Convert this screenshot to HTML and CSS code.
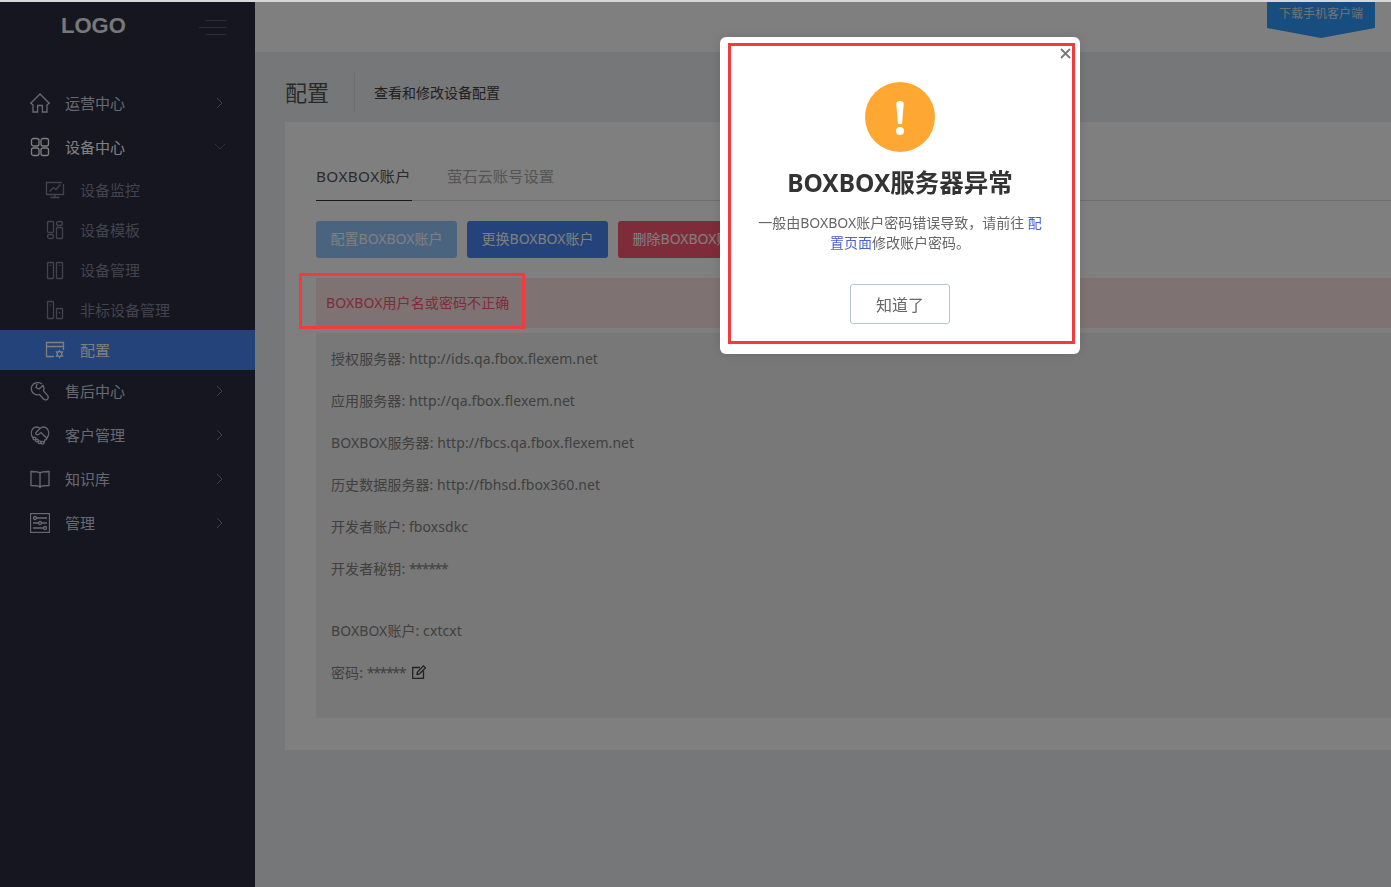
FILE: index.html
```html
<!DOCTYPE html>
<html lang="zh-CN">
<head>
<meta charset="utf-8">
<title>配置</title>
<link rel="stylesheet" href="styles.css">
</head>
<body>
<div class="topline"></div>
<div class="app">
  <aside class="sidebar">
    <div class="brand">
      <span class="logo">LOGO</span>
      <svg class="burger" viewBox="0 0 27 16" width="27" height="16"><path d="M7 .5H27M0 7.500H27M7 14.500H27"/></svg>
    </div>
    <nav class="nav">
      <a class="nav-item">
        <svg class="ico" viewBox="0 0 20 20"><path d="M10 1 .8 10.200l2.200 1.600V19h4.600v-6.500h4.800V19H17v-7.200l2.200-1.600z"/></svg>
        <span class="nav-label">运营中心</span>
        <svg class="chev" viewBox="0 0 8 12"><path d="M1 1l5 5-5 5"/></svg>
      </a>
      <a class="nav-item nav-open">
        <svg class="ico" viewBox="0 0 20 20"><rect x="1.500" y="1.500" width="7.500" height="7.500" rx="2"/><rect x="11" y="1.500" width="7.500" height="7.500" rx="2"/><rect x="1.500" y="11" width="7.500" height="7.500" rx="2"/><rect x="11" y="11" width="7.500" height="7.500" rx="2"/></svg>
        <span class="nav-label">设备中心</span>
        <svg class="chev-down" viewBox="0 0 12 8"><path d="M1 1l5 5 5-5"/></svg>
      </a>
      <div class="subnav">
        <a class="sub-item">
          <svg class="ico" viewBox="0 0 20 20"><path d="M17 2.500H1.500v12h17V4M10 14.500v3M5.500 17.500h9M4.500 11.500l4-4 2.500 2 4.500-5"/></svg>
          <span class="sub-label">设备监控</span>
        </a>
        <a class="sub-item">
          <svg class="ico" viewBox="0 0 20 20"><rect x="2.500" y="1.500" width="6" height="11" rx="1"/><rect x="2.500" y="14.500" width="6" height="4" rx="2"/><rect x="11.500" y="1.500" width="6" height="4" rx="2"/><rect x="11.500" y="7.500" width="6" height="11" rx="1"/></svg>
          <span class="sub-label">设备模板</span>
        </a>
        <a class="sub-item">
          <svg class="ico" viewBox="0 0 20 20"><rect x="2.500" y="2.500" width="6" height="16" rx=".5"/><rect x="11.500" y="2.500" width="6" height="16" rx=".5"/><path d="M5.500 5v1M14.500 5v1"/></svg>
          <span class="sub-label">设备管理</span>
        </a>
        <a class="sub-item">
          <svg class="ico" viewBox="0 0 20 20"><rect x="2.500" y="1.500" width="6" height="17" rx=".5"/><rect x="11.500" y="8.500" width="6" height="10" rx=".5"/><path d="M5.500 4.500v1M14.500 12v1.500"/></svg>
          <span class="sub-label">非标设备管理</span>
        </a>
        <a class="sub-item sub-active">
          <svg class="ico" viewBox="0 0 20 20"><path d="M9 16.500H1.500V2.500h17V10M1.500 6.500h17"/><path d="M14.500 10.500l1 1.500h2l-1 2 1 2h-2l-1 1.500-1-1.500h-2l1-2-1-2h2z"/></svg>
          <span class="sub-label">配置</span>
        </a>
      </div>
      <a class="nav-item nav-after">
        <svg class="ico" viewBox="0 0 20 20"><path d="M12 3C9 .8 4 1.200 2 4.800c-1.500 3-.5 6.700 2.500 8.200 1.800 1 3.500 1 5 .5l4 4.500c1 1.200 3 1.200 4 .2 1-1 1-2.800 0-3.800l-4-4.500c.8-1.800.7-3.800-.5-5.500L9 8 6 6.500 7 2.800"/></svg>
        <span class="nav-label">售后中心</span>
        <svg class="chev" viewBox="0 0 8 12"><path d="M1 1l5 5-5 5"/></svg>
      </a>
      <a class="nav-item">
        <svg class="ico" viewBox="0 0 20 20"><path d="M3 13C.8 10 .8 6 3 3.500c2-2 5-2 7 0 2-2 5-2 7 0 2.200 2.500 2.200 6.500 0 9.500M10 3.500 6 7.500c-1 1.200.8 3 2.500 2l2.500-2 5.500 5.500c.8 1-.6 2.500-1.800 1.500M15 14.500l-1 3.500"/><circle cx="4.500" cy="13.500" r="1.400"/><circle cx="7" cy="15.500" r="1.400"/><circle cx="9.500" cy="17.200" r="1.400"/><circle cx="12.500" cy="17.800" r="1.400"/></svg>
        <span class="nav-label">客户管理</span>
        <svg class="chev" viewBox="0 0 8 12"><path d="M1 1l5 5-5 5"/></svg>
      </a>
      <a class="nav-item">
        <svg class="ico" viewBox="0 0 20 20"><path d="M10 4C8.500 2.500 6 2.500 1 2.500v14c5 0 7.500 0 9 1.500 1.500-1.500 4-1.500 9-1.500v-14c-5 0-7.500 0-9 1.500zM10 4v15"/></svg>
        <span class="nav-label">知识库</span>
        <svg class="chev" viewBox="0 0 8 12"><path d="M1 1l5 5-5 5"/></svg>
      </a>
      <a class="nav-item">
        <svg class="ico" viewBox="0 0 20 20"><rect x=".5" y=".5" width="19" height="19"/><circle cx="5" cy="5" r="1.500"/><circle cx="10" cy="10" r="1.500"/><circle cx="15" cy="15" r="1.500"/><path d="M6.500 5H17M3 10h5.500M11.500 10H17M3 15h10.500"/></svg>
        <span class="nav-label">管理</span>
        <svg class="chev" viewBox="0 0 8 12"><path d="M1 1l5 5-5 5"/></svg>
      </a>
    </nav>
  </aside>
  <main class="main">
    <header class="topbar">
      <div class="download"><span>下载手机客户端</span></div>
    </header>
    <div class="page-head">
      <h1 class="page-title">配置</h1>
      <p class="page-desc">查看和修改设备配置</p>
    </div>
    <section class="card">
      <div class="tabs">
        <a class="tab tab-active">BOXBOX账户</a>
        <a class="tab">萤石云账号设置</a>
      </div>
      <div class="actions">
        <button class="btn btn-light">配置BOXBOX账户</button>
        <button class="btn btn-blue">更换BOXBOX账户</button>
        <button class="btn btn-red">删除BOXBOX账户</button>
      </div>
      <div class="alert">BOXBOX用户名或密码不正确</div>
      <div class="info">
        <p class="row">授权服务器: http://ids.qa.fbox.flexem.net</p>
        <p class="row">应用服务器: http://qa.fbox.flexem.net</p>
        <p class="row">BOXBOX服务器: http://fbcs.qa.fbox.flexem.net</p>
        <p class="row">历史数据服务器: http://fbhsd.fbox360.net</p>
        <p class="row">开发者账户: fboxsdkc</p>
        <p class="row">开发者秘钥: <span class="stars">******</span></p>
        <p class="row row-gap">BOXBOX账户: cxtcxt</p>
        <p class="row">密码: <span class="stars">******</span>
          <svg class="edit" viewBox="0 0 14 14"><path d="M8 2.500H.7v10.800h10.800V6M5 9.500l.5-2.500L11.500.8l2 2L7.500 9z"/></svg>
        </p>
      </div>
    </section>
  </main>
</div>
<div class="overlay"></div>
<div class="mark mark-alert"></div>
<div class="modal">
  <div class="mark mark-modal"></div>
  <svg class="close" viewBox="0 0 11 11"><path d="M1 1l9 9M10 1l-9 9"/></svg>
  <div class="warn"><span class="warn-bar"></span><span class="warn-dot"></span></div>
  <h2 class="modal-title">BOXBOX服务器异常</h2>
  <p class="modal-text">一般由BOXBOX账户密码错误导致，请前往 <a class="modal-link">配置页面</a>修改账户密码。</p>
  <button class="modal-btn">知道了</button>
</div>
</body>
</html>
```
FILE: styles.css
```css
* { box-sizing: border-box; }
html, body { margin: 0; height: 100%; overflow: hidden; }
body {
  font-family: "Noto Sans", "Noto Sans CJK SC", sans-serif;
  font-size: 15px;
  background: #edeef2;
  color: #8a8a8a;
}
.topline { height: 2px; background: #d8d8d8; position: relative; z-index: 12; }
.app { display: flex; height: 885px; }

/* sidebar */
.sidebar { width: 255px; flex: none; background: #2a2c40; }
.brand { height: 79px; position: relative; }
.logo {
  position: absolute; left: 61px; top: 10px;
  font: bold 22px/28px "Liberation Sans", sans-serif;
  color: #f0f0f0;
}
.burger { position: absolute; left: 199px; top: 18px; fill: none; stroke: #5a5c68; stroke-width: 1; }
.nav-item {
  display: flex; align-items: center; height: 44px;
  padding-left: 30px; color: #d0d3e0;
}
.nav-open { color: #fff; }
.nav-after { margin-top: -1px; }
.nav-label { margin-left: 15px; flex: 1; line-height: 20px; }
.ico { width: 20px; height: 20px; flex: none; fill: none; stroke: currentColor; stroke-width: 1.3; }
.chev { width: 8px; height: 12px; margin-right: 31px; fill: none; stroke: #7e8298; stroke-width: 1; }
.chev-down { width: 12px; height: 8px; margin-right: 29px; fill: none; stroke: #5c6090; stroke-width: 1; }
.subnav { margin-top: 1px; }
.sub-item {
  display: flex; align-items: center; gap: 15px; height: 40px;
  padding-left: 45px; color: #82869c;
}
.sub-label { line-height: 20px; padding-bottom: 1px; }
.sub-active { background: #4886f4; color: #fff; }

/* main */
.main { flex: 1; min-width: 0; display: flex; flex-direction: column; }
.topbar { height: 50px; background: #fff; position: relative; flex: none; }
.download {
  position: absolute; right: 16px; top: 0; width: 108px; height: 36px;
  background: #2e9aff;
  clip-path: polygon(0 0, 100% 0, 100% 26px, 50% 100%, 0 26px);
  color: #dfe6ee; font-size: 12px; line-height: 23px; text-align: center;
}
.page-head { height: 70px; flex: none; display: flex; align-items: flex-start; padding: 21px 0 0 30px; }
.page-title {
  margin: 0; padding-right: 25px; height: 39px; line-height: 38px;
  font-size: 22px; font-weight: 400; color: #555;
  border-right: 1px solid #dcdce0;
}
.page-desc { margin: 0 0 0 19px; font-size: 14px; line-height: 40px; color: #404040; }
.card {
  margin-left: 30px; background: #fff; padding: 0 0 32px 31px;
}
.tabs {
  height: 79px; display: flex; align-items: flex-end; gap: 35px;
  border-bottom: 1px solid #dcdcdc;
}
.tab { height: 34px; line-height: 20px; font-size: 15.3px; color: #aaa; }
.tab-active { color: #555; border-bottom: 1px solid #333; margin-bottom: -1px; padding-right: 1px; height: 35px; letter-spacing: .4px; }
.actions { display: flex; gap: 10px; margin-top: 20px; }
.btn {
  width: 141px; height: 37px; flex: none; border: 0; border-radius: 3px;
  font: inherit; font-size: 14px; line-height: 34px; color: #fff; white-space: nowrap; padding: 0 0 1px;
}
.btn-light { background: #94c8ff; }
.btn-blue { background: #4886f4; }
.btn-red { background: #ff5874; }
.alert {
  margin-top: 20px; height: 50px; line-height: 50px; padding-left: 10px;
  background: #ffe4e4; font-size: 14px; letter-spacing: .1px; color: #ff5874;
}
.info { margin-top: 5px; background: #f0f0f0; padding: 5px 0 24px 15px; height: 385px; }
.row { margin: 0; height: 42px; line-height: 42px; font-size: 14px; letter-spacing: .08px; color: #808080; }
.row-gap { margin-top: 20px; }
.stars { letter-spacing: -1.3px; }
.edit { width: 14px; height: 14px; margin-left: 3px; fill: none; stroke: #444; stroke-width: 1.3; vertical-align: -1px; }

/* overlay */
.overlay { position: fixed; inset: 0; background: rgba(0, 0, 0, .5); z-index: 10; }
.mark { position: absolute; border: 3px solid #f33b3b; z-index: 12; }
.mark-alert { left: 299px; top: 273px; width: 226px; height: 56px; }
.modal {
  position: fixed; left: 720px; top: 37px; width: 360px; height: 317px;
  background: #fff; border-radius: 6px; z-index: 11;
  display: flex; flex-direction: column; align-items: center; padding-top: 45px;
  box-shadow: 0 0 12px rgba(0, 0, 0, .12);
}
.mark-modal { left: 8px; top: 6px; width: 347px; height: 301px; }
.close { position: absolute; right: 9px; top: 11px; width: 11px; height: 11px; fill: none; stroke: #777; stroke-width: 1.8; z-index: 13; }
.warn {
  width: 70px; height: 70px; border-radius: 50%; background: #fea733; flex: none;
  display: flex; flex-direction: column; align-items: center; padding-top: 19px; gap: 3px;
}
.warn-bar { width: 8px; height: 23px; background: #fff; border-radius: 4px 4px 2px 2px; clip-path: polygon(0 0, 100% 0, 75% 100%, 25% 100%); }
.warn-dot { width: 8px; height: 8px; background: #fff; border-radius: 50%; }
.modal-title { margin: 13px 0 0; font-size: 24.5px; line-height: 36px; font-weight: 700; color: #333; white-space: nowrap; }
.modal-text { margin: 12px 0 0; width: 290px; font-size: 14px; line-height: 20px; color: #666; text-align: center; }
.modal-link { color: #4a5fd8; }
.modal-btn {
  margin-top: 31px; width: 100px; height: 40px; background: #fff;
  border: 1px solid #b4c4d0; border-radius: 3px; font: inherit; font-size: 16px; color: #666; padding: 0;
}
```
